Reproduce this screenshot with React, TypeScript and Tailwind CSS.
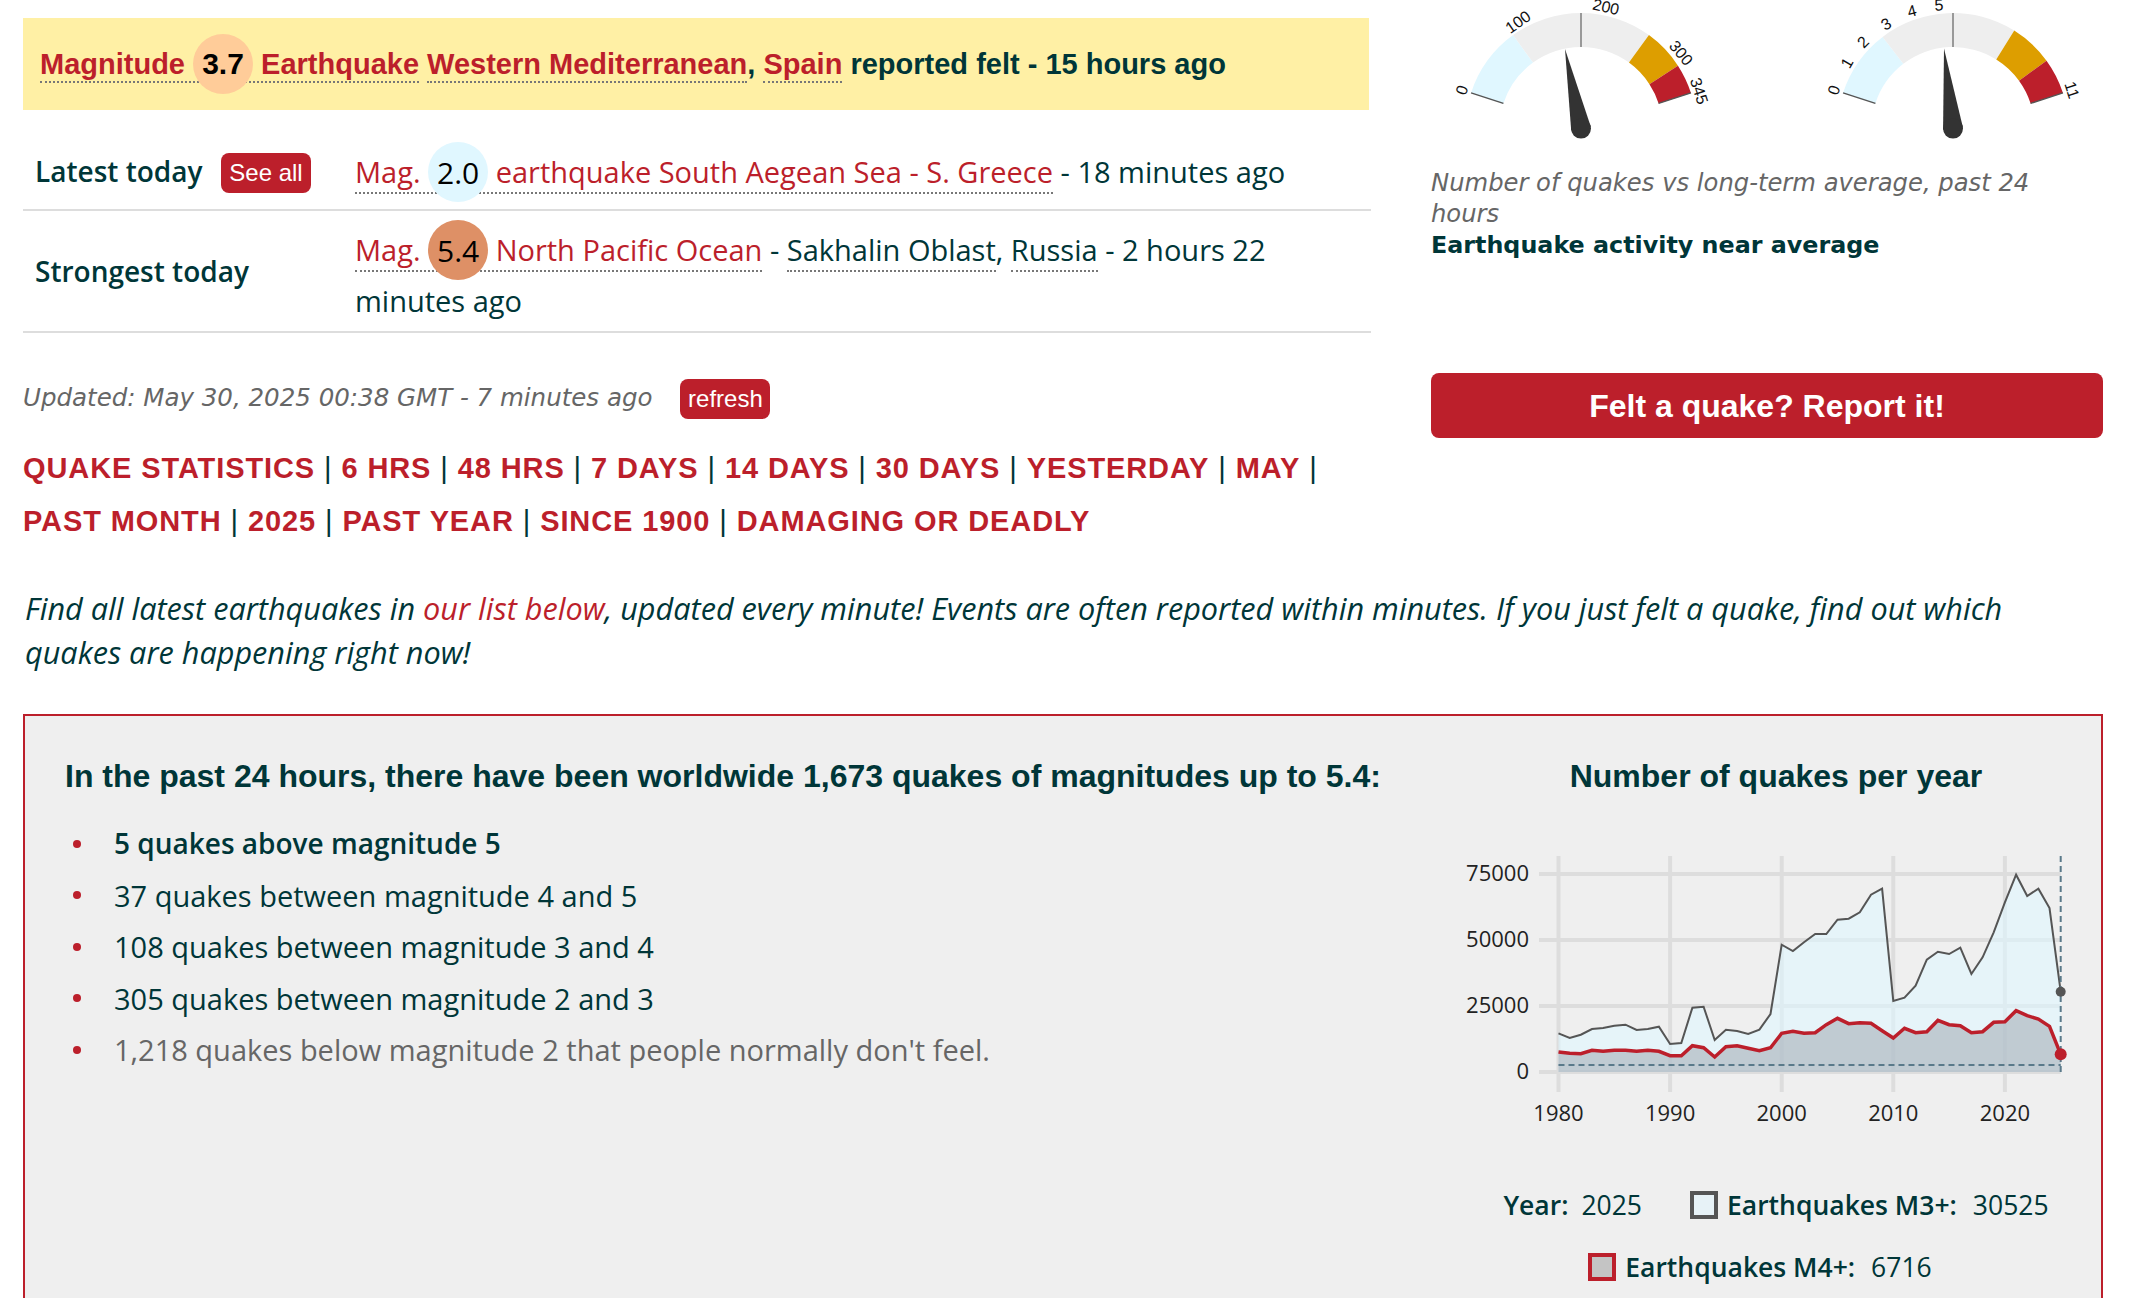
const RED = "#bc1f2b";

const sans = "font-['Open_Sans',sans-serif]";
const arial = "font-['Liberation_Sans',Arial,sans-serif]";
const dejavu = "font-['DejaVu_Sans',sans-serif]";

// degrees from vertical, -72 is the left end of the dial
function wedge(from: number, to: number, cx: number, cy: number, R: number, r: number) {
  const p = (a: number, rad: number) => {
    const t = (a * Math.PI) / 180;
    return `${(cx + rad * Math.sin(t)).toFixed(2)} ${(cy - rad * Math.cos(t)).toFixed(2)}`;
  };
  return `M${p(from, R)} A${R} ${R} 0 0 1 ${p(to, R)} L${p(to, r)} A${r} ${r} 0 0 0 ${p(from, r)} Z`;
}

type GaugeProps = {
  stops: number[];
  tip: [number, number];
  labels: { t: string; x: number; y: number; r: number }[];
};

function Gauge({ stops, tip, labels }: GaugeProps) {
  const cx = 150;
  const cy = 128.6;
  const R = 115.6;
  const r = 81.6;
  const colors = ["#e0f7ff", "#eeeeee", "#dd9e00", RED];
  const len = Math.hypot(tip[0], tip[1]);
  const nx = (-tip[1] / len) * 10;
  const ny = (tip[0] / len) * 10;
  const end = (72 * Math.PI) / 180;
  return (
    <svg width="300" height="145" className="block">
      {colors.map((c, i) => (
        <path key={c} d={wedge(stops[i], stops[i + 1], cx, cy, R, r)} fill={c} />
      ))}
      <line x1={cx} y1={cy - R} x2={cx} y2={cy - r} stroke="#999" strokeWidth="2" />
      <line
        x1={cx - R * Math.sin(end)}
        y1={cy - R * Math.cos(end)}
        x2={cx - r * Math.sin(end)}
        y2={cy - r * Math.cos(end)}
        stroke="#555"
        strokeWidth="1.5"
      />
      <line
        x1={cx + R * Math.sin(end)}
        y1={cy - R * Math.cos(end)}
        x2={cx + r * Math.sin(end)}
        y2={cy - r * Math.cos(end)}
        stroke="#555"
        strokeWidth="1.5"
      />
      <path
        d={`M${cx + tip[0]} ${cy + tip[1]} L${cx + nx} ${cy + ny} L${cx - nx} ${cy - ny} Z`}
        fill="#333"
      />
      <circle cx={cx} cy={cy} r="10" fill="#333" />
      {labels.map((l) => (
        <text
          key={l.t}
          x={l.x}
          y={l.y}
          transform={`rotate(${l.r} ${l.x} ${l.y})`}
          textAnchor="middle"
          dominantBaseline="central"
          fontSize="16"
          fill="#111"
          fontFamily="Liberation Sans, Arial, sans-serif"
        >
          {l.t}
        </text>
      ))}
    </svg>
  );
}

// traced per year 1980-2025, in px x3 from top of the chart
const m3 = [553, 567, 557, 540, 537, 530, 527, 543, 540, 533, 585, 582, 476, 473, 573, 542, 546, 555, 542, 495, 287, 306, 280, 255, 255, 212, 209, 190, 137, 119, 456, 446, 410, 332, 308, 315, 296, 375, 325, 250, 160, 77, 141, 119, 177, 428];
const m4 = [609, 613, 614, 604, 607, 604, 604, 607, 604, 607, 620, 620, 590, 596, 624, 593, 590, 598, 605, 596, 553, 547, 553, 551, 527, 508, 524, 521, 523, 545, 567, 538, 551, 548, 514, 527, 530, 551, 548, 520, 518, 485, 500, 510, 532, 616];

function QuakeChart() {
  const x = (i: number) => 107.5 + i * 11.16;
  const line = (d: number[]) =>
    d.map((v, i) => `${i ? "L" : "M"}${x(i).toFixed(1)} ${(v / 3).toFixed(1)}`).join(" ");
  const area = (d: number[]) => `${line(d)} L${x(45)} 223 L${x(0)} 223 Z`;
  const font = "Open Sans, sans-serif";
  return (
    <svg width="650" height="290" className="block">
      {[0, 10, 20, 30, 40].map((y) => (
        <line key={y} x1={x(y)} y1="7" x2={x(y)} y2="243" stroke="#dddddd" strokeWidth="4" />
      ))}
      {[
        ["75000", 25],
        ["50000", 91],
        ["25000", 157],
        ["0", 223],
      ].map(([t, y]) => (
        <g key={t}>
          <line x1="88" y1={y} x2={x(45)} y2={y} stroke="#dddddd" strokeWidth="4" />
          <text x="78" y={Number(y)} dy="7" textAnchor="end" fontSize="22" fill="#222" fontFamily={font}>
            {t}
          </text>
        </g>
      ))}
      {[1980, 1990, 2000, 2010, 2020].map((y) => (
        <text key={y} x={x(y - 1980)} y="272" textAnchor="middle" fontSize="22" fill="#222" fontFamily={font}>
          {y}
        </text>
      ))}
      <path d={area(m3)} fill="#dff6ff" fillOpacity="0.6" />
      <path d={area(m4)} fill="#a0aab3" fillOpacity="0.55" />
      <path d={line(m3)} fill="none" stroke="#555" strokeWidth="2" />
      <path d={line(m4)} fill="none" stroke={RED} strokeWidth="3.5" />
      <line x1={x(45)} y1="7" x2={x(45)} y2="223" stroke="#5a7a8a" strokeWidth="2" strokeDasharray="6 4" />
      <line x1={x(0)} y1="216" x2={x(45)} y2="216" stroke="#5a7a8a" strokeWidth="2" strokeDasharray="6 4" />
      <circle cx={x(45)} cy={428 / 3} r="5" fill="#555" />
      <circle cx={x(45)} cy={616 / 3} r="6" fill={RED} />
    </svg>
  );
}

function Link({ children }: { children: React.ReactNode }) {
  return <a className="border-b-2 border-dotted border-[#777] pb-[1px] text-[#bc1f2b]">{children}</a>;
}

function MagDot({ value, color }: { value: string; color: string }) {
  return (
    <span
      className={`-my-[12px] inline-flex h-[60px] w-[60px] -translate-y-[3px] items-center justify-center rounded-full align-middle text-[30px] text-black ${color}`}
    >
      {value}
    </span>
  );
}

function Badge({ children, className = "" }: { children: React.ReactNode; className?: string }) {
  return (
    <span className={`inline-flex h-10 w-[90px] items-center justify-center rounded-lg bg-[#bc1f2b] text-[24px] text-white ${arial} ${className}`}>
      {children}
    </span>
  );
}

const navRows = [
  ["QUAKE STATISTICS", "6 HRS", "48 HRS", "7 DAYS", "14 DAYS", "30 DAYS", "YESTERDAY", "MAY"],
  ["PAST MONTH", "2025", "PAST YEAR", "SINCE 1900", "DAMAGING OR DEADLY"],
];

const counts = [
  { text: "5 quakes above magnitude 5", cls: "text-[28px] font-semibold" },
  { text: "37 quakes between magnitude 4 and 5", cls: "" },
  { text: "108 quakes between magnitude 3 and 4", cls: "" },
  { text: "305 quakes between magnitude 2 and 3", cls: "" },
  { text: "1,218 quakes below magnitude 2 that people normally don't feel.", cls: "text-[#666]" },
];

export default function App() {
  return (
    <div className={`h-screen overflow-hidden bg-white pl-[23px] pr-[43px] text-[29px] text-[#003638] ${sans}`}>
      <div className="flex justify-between">
        {/* left column */}
        <div className="w-[1348px]">
          <div className={`mt-[18px] flex h-[92px] w-[1346px] items-center bg-[#fff0a5] pl-[17px] pt-[2px] font-bold ${arial}`}>
            <span>
              <Link>
                Magnitude <MagDot value="3.7" color="bg-[#ffcc99]" /> Earthquake
              </Link>{" "}
              <Link>Western Mediterranean</Link>, <Link>Spain</Link> reported felt - 15 hours ago
            </span>
          </div>

          <div className="mt-[26px]">
            <div className="flex border-b-2 border-[#ddd] pb-[12px] pt-[10px]">
              <div className="flex w-[332px] items-center pb-[2px] pl-[12px]">
                <span className="w-[186px] text-[28px] font-semibold">Latest today</span>
                <Badge className="mt-[5px]">See all</Badge>
              </div>
              <div className="flex-1 leading-[51px]">
                <Link>
                  Mag. <MagDot value="2.0" color="bg-[#e0f7ff]" /> earthquake South Aegean Sea - S. Greece
                </Link>{" "}
                - 18 minutes ago
              </div>
            </div>
            <div className="flex border-b-2 border-[#ddd] pb-[5px] pt-[13px]">
              <div className="flex w-[332px] items-center pb-[8px] pl-[12px] text-[28px] font-semibold">Strongest today</div>
              <div className="flex-1 leading-[51px]">
                <Link>
                  Mag. <MagDot value="5.4" color="bg-[#de9066]" /> North Pacific Ocean
                </Link>{" "}
                - <a className="border-b-2 border-dotted border-[#777] pb-[1px]">Sakhalin Oblast</a>,{" "}
                <a className="border-b-2 border-dotted border-[#777] pb-[1px]">Russia</a> - 2 hours 22 minutes ago
              </div>
            </div>
          </div>

          <div className="mt-[43px] flex h-10 items-center text-[#666]">
            <span className={`mt-[4px] text-[24.5px] italic ${dejavu}`}>Updated: May 30, 2025 00:38 GMT - 7 minutes ago</span>
            <span className="ml-[28px]">
              <Badge>refresh</Badge>
            </span>
          </div>

          <div className={`mt-[26px] text-[29px] font-bold leading-[53px] tracking-[0.9px] ${arial}`}>
            {navRows.map((row, r) => (
              <div key={r}>
                {row.map((item, i) => (
                  <span key={item}>
                    <span className="text-[#bc1f2b]">{item}</span>
                    {(i < row.length - 1 || r === 0) && <span className="font-normal"> | </span>}
                  </span>
                ))}
              </div>
            ))}
          </div>
        </div>

        {/* right column */}
        <div className="w-[672px]">
          <div className="flex justify-between">
            <Gauge
              stops={[-72, -36, 36, 57, 72]}
              tip={[-16, -79.6]}
              labels={[
                { t: "0", x: 31, y: 90, r: -72 },
                { t: "100", x: 87, y: 22, r: -35 },
                { t: "200", x: 175, y: 7, r: 13 },
                { t: "300", x: 250, y: 53, r: 50 },
                { t: "345", x: 268, y: 91, r: 72 },
              ]}
            />
            <Gauge
              stops={[-72, -37.5, 32, 54, 72]}
              tip={[-9, -80]}
              labels={[
                { t: "0", x: 31, y: 90, r: -72 },
                { t: "1", x: 44, y: 63, r: -60 },
                { t: "2", x: 60, y: 42, r: -45 },
                { t: "3", x: 83, y: 24, r: -30 },
                { t: "4", x: 109, y: 11, r: -15 },
                { t: "5", x: 136, y: 5, r: -3 },
                { t: "11", x: 269, y: 90, r: 72 },
              ]}
            />
          </div>
          <div className={`mt-[22px] text-[23.8px] leading-[31px] ${dejavu}`}>
            <p className="text-[24.25px] italic text-[#666]">Number of quakes vs long-term average, past 24 hours</p>
            <p className="mt-[1px] font-bold">Earthquake activity near average</p>
          </div>
          <button className={`mt-[112px] h-[65px] w-full rounded-lg bg-[#bc1f2b] text-[32px] font-bold text-white ${arial}`}>
            Felt a quake? Report it!
          </button>
        </div>
      </div>

      <p className="ml-[2px] mt-[38px] pr-[60px] text-[30.65px] italic leading-[44px]">
        Find all latest earthquakes in <span className="text-[#bc1f2b]">our list below</span>, updated every minute!
        Events are often reported within minutes. If you just felt a quake, find out which quakes are happening right
        now!
      </p>

      <div className="mt-[40px] flex h-[800px] border-2 border-[#bc1f2b] bg-[#efefef] pl-[40px]">
        <div className="flex-1 pt-[36px]">
          <h2 className={`text-[32px] font-bold leading-[48px] ${arial}`}>
            In the past 24 hours, there have been worldwide 1,673 quakes of magnitudes up to 5.4:
          </h2>
          <ul className="mt-[18px] leading-[51.5px]">
            {counts.map((c) => (
              <li key={c.text} className={`flex items-center ${c.cls}`}>
                <span className="ml-2 mr-[33px] h-2 w-2 rounded-full bg-[#bc1f2b]" />
                {c.text}
              </li>
            ))}
          </ul>
        </div>
        <div className="w-[650px] pt-[36px]">
          <h2 className={`text-center text-[32px] font-bold leading-[48px] ${arial}`}>Number of quakes per year</h2>
          <div className="mt-[49px]">
            <QuakeChart />
          </div>
          <div className="mt-[35px] flex items-center justify-center text-[26.5px] leading-[62px]">
            <span className="font-semibold">Year:</span>
            <span className="ml-[13px]">2025</span>
            <span className="ml-[48px] h-7 w-7 border-4 border-[#555] bg-[#e7f2f7]" />
            <span className="ml-[9px] font-semibold">Earthquakes M3+:</span>
            <span className="ml-[16px]">30525</span>
          </div>
          <div className="flex items-center justify-center pr-[32px] text-[26.5px] leading-[62px]">
            <span className="h-7 w-7 border-4 border-[#bc1f2b] bg-[#c4c4c4]" />
            <span className="ml-[9px] font-semibold">Earthquakes M4+:</span>
            <span className="ml-[16px]">6716</span>
          </div>
        </div>
      </div>
    </div>
  );
}
